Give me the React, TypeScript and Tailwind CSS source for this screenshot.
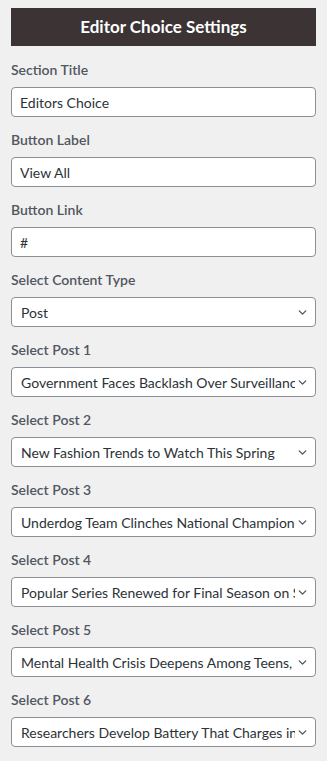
import { ChevronDown } from 'lucide-react';

const posts = [
    'Government Faces Backlash Over Surveillance Law',
    'New Fashion Trends to Watch This Spring',
    'Underdog Team Clinches National Championship',
    'Popular Series Renewed for Final Season on Streaming',
    'Mental Health Crisis Deepens Among Teens, Study Finds',
    'Researchers Develop Battery That Charges in Minutes',
];

function Field({ label, children }: { label: string; children: React.ReactNode }) {
    return (
        <div className="mb-[13px]">
            <label className="block text-[14px] leading-[20px] font-semibold text-[#50575e] mb-[7px]">{label}</label>
            {children}
        </div>
    );
}

function TextInput({ value }: { value: string }) {
    return (
        <input
            type="text"
            defaultValue={value}
            className="block w-full h-[30px] rounded-[4px] border border-[#8c8f94] bg-white px-[8px] text-[14px] text-[#2c3338] outline-none"
        />
    );
}

function Select({ value }: { value: string }) {
    return (
        <div className="relative flex h-[30px] w-full items-center rounded-[4px] border border-[#8c8f94] bg-white pl-[9px] pr-[20px]">
            <span className="block overflow-hidden whitespace-nowrap text-[14px] text-[#2c3338]">{value}</span>
            <ChevronDown className="absolute right-[6px] top-[8px] size-[13px] text-[#50575e]" strokeWidth={2.5} />
        </div>
    );
}

export default function App() {
    return (
        <div className="min-h-[761px] bg-[#f0f0f1] px-[11px] pt-[8px]" style={{ fontFamily: 'Lato, "Noto Sans", sans-serif' }}>
            {/* Header */}
            <div className="flex h-[38px] items-center justify-center bg-[#3c3434]">
                <h2 className="text-[17px] font-bold text-white">Editor Choice Settings</h2>
            </div>

            <div className="pt-[14px]">
                <Field label="Section Title">
                    <TextInput value="Editors Choice" />
                </Field>
                <Field label="Button Label">
                    <TextInput value="View All" />
                </Field>
                <Field label="Button Link">
                    <TextInput value="#" />
                </Field>
                <Field label="Select Content Type">
                    <Select value="Post" />
                </Field>
                {posts.map((p, i) => (
                    <Field key={i} label={`Select Post ${i + 1}`}>
                        <Select value={p} />
                    </Field>
                ))}
            </div>
        </div>
    );
}
